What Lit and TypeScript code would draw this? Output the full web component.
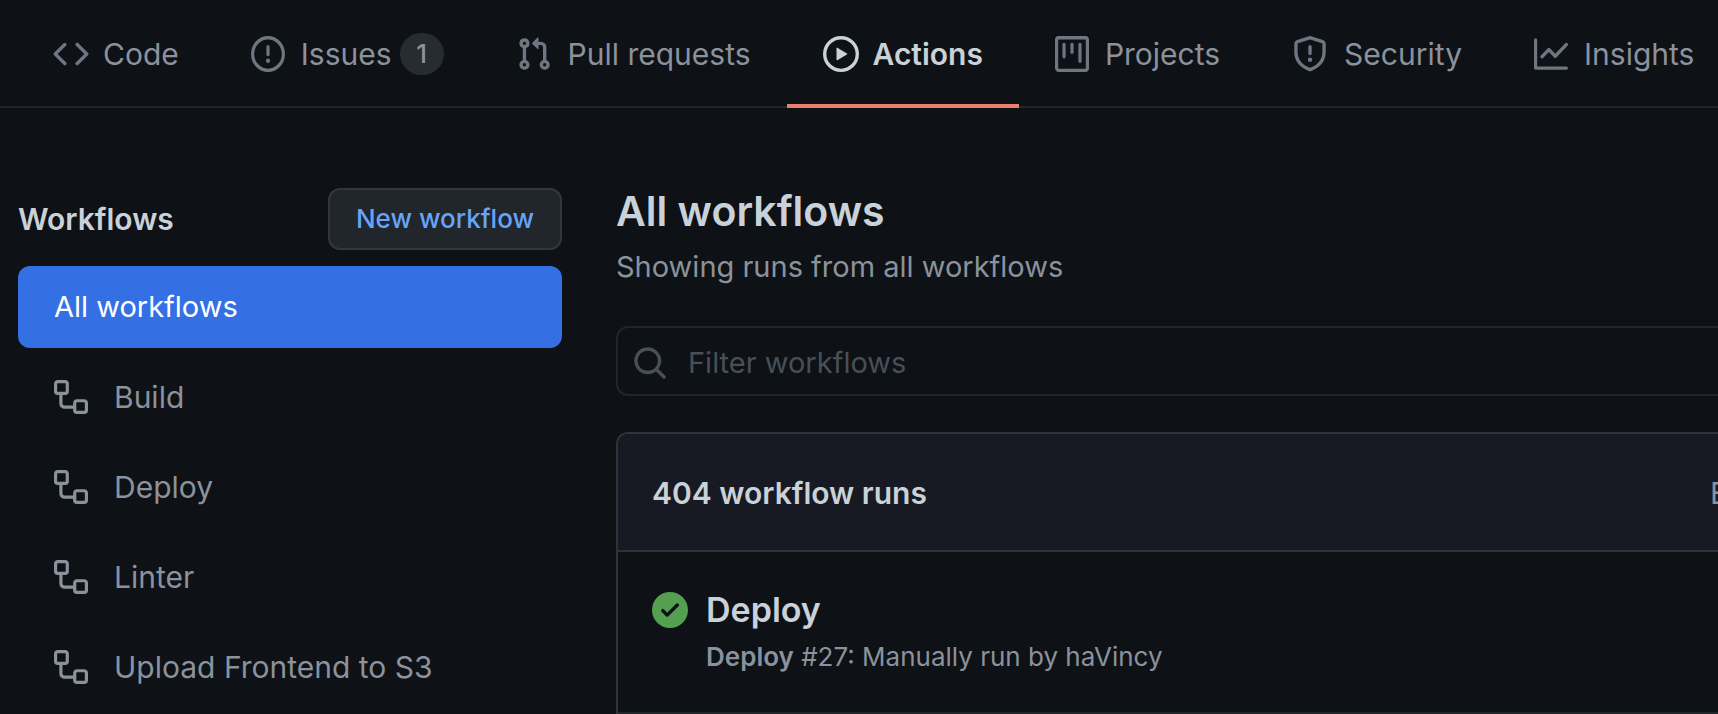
import { LitElement, html, css, svg } from "lit";
import { customElement } from "lit/decorators.js";

const icons: Record<string, string> = {
  code: "M4.72 3.22a.75.75 0 011.06 1.06L2.06 8l3.72 3.72a.75.75 0 11-1.06 1.06L.47 8.53a.75.75 0 010-1.06l4.25-4.25zm6.56 0a.75.75 0 10-1.06 1.06L13.94 8l-3.72 3.72a.75.75 0 101.06 1.06l4.25-4.25a.75.75 0 000-1.06l-4.25-4.25z",
  issue: "M8 1.5a6.5 6.5 0 100 13 6.5 6.5 0 000-13zM0 8a8 8 0 1116 0A8 8 0 010 8zm9 3a1 1 0 11-2 0 1 1 0 012 0zm-.25-6.25a.75.75 0 00-1.5 0v3.5a.75.75 0 001.5 0v-3.5z",
  pull: "M7.177 3.073L9.573.677A.25.25 0 0110 .854v4.792a.25.25 0 01-.427.177L7.177 3.427a.25.25 0 010-.354zM3.75 2.5a.75.75 0 100 1.5.75.75 0 000-1.5zm-2.25.75a2.25 2.25 0 113 2.122v5.256a2.251 2.251 0 11-1.5 0V5.372A2.25 2.25 0 011.5 3.25zM11 2.5h-1V4h1a1 1 0 011 1v5.628a2.251 2.251 0 101.5 0V5A2.5 2.5 0 0011 2.5zm1 10.25a.75.75 0 111.5 0 .75.75 0 01-1.5 0zM3.75 12a.75.75 0 100 1.5.75.75 0 000-1.5z",
  play: "M1.5 8a6.5 6.5 0 1113 0 6.5 6.5 0 01-13 0zM8 0a8 8 0 100 16A8 8 0 008 0zM6.379 5.227A.25.25 0 006 5.442v5.117a.25.25 0 00.379.214l4.264-2.559a.25.25 0 000-.428L6.379 5.227z",
  project: "M1.75 0A1.75 1.75 0 000 1.75v12.5C0 15.216.784 16 1.75 16h12.5A1.75 1.75 0 0016 14.25V1.75A1.75 1.75 0 0014.25 0H1.75zM1.5 1.75a.25.25 0 01.25-.25h12.5a.25.25 0 01.25.25v12.5a.25.25 0 01-.25.25H1.75a.25.25 0 01-.25-.25V1.75zM11.75 3a.75.75 0 00-.75.75v7.5a.75.75 0 001.5 0v-7.5a.75.75 0 00-.75-.75zm-8.25.75a.75.75 0 011.5 0v5.5a.75.75 0 01-1.5 0v-5.5zM8 3a.75.75 0 00-.75.75v3.5a.75.75 0 001.5 0v-3.5A.75.75 0 008 3z",
  shield: "M7.467.133a1.75 1.75 0 011.066 0l5.25 1.68A1.75 1.75 0 0115 3.48V7c0 1.566-.32 3.182-1.303 4.682-.983 1.498-2.585 2.813-5.032 3.855a1.7 1.7 0 01-1.33 0c-2.447-1.042-4.049-2.357-5.032-3.855C1.32 10.182 1 8.566 1 7V3.48a1.75 1.75 0 011.217-1.667l5.25-1.68zm.61 1.429a.25.25 0 00-.153 0l-5.25 1.68a.25.25 0 00-.174.238V7c0 1.358.275 2.666 1.057 3.86.784 1.194 2.121 2.34 4.366 3.297a.2.2 0 00.154 0c2.245-.956 3.582-2.104 4.366-3.298C13.225 9.666 13.5 8.36 13.5 7V3.48a.25.25 0 00-.174-.237l-5.25-1.68zM9 10.5a1 1 0 11-2 0 1 1 0 012 0zm-.25-5.75a.75.75 0 10-1.5 0v3a.75.75 0 001.5 0v-3z",
  graph: "M1.5 1.75a.75.75 0 00-1.5 0v12.5c0 .414.336.75.75.75h14.5a.75.75 0 000-1.5H1.5V1.75zm14.28 2.53a.75.75 0 00-1.06-1.06L10 7.94 7.53 5.47a.75.75 0 00-1.06 0L3.22 8.72a.75.75 0 001.06 1.06L7 7.06l2.47 2.47a.75.75 0 001.06 0l5.25-5.25z",
  workflow: "M0 1.75C0 .784.784 0 1.75 0h3.5C6.216 0 7 .784 7 1.75v3.5A1.75 1.75 0 015.25 7H4v4a1 1 0 001 1h4v-1.25C9 9.784 9.784 9 10.75 9h3.5c.966 0 1.75.784 1.75 1.75v3.5A1.75 1.75 0 0114.25 16h-3.5A1.75 1.75 0 019 14.25v-.75H5A2.5 2.5 0 012.5 11V7h-.75A1.75 1.75 0 010 5.25v-3.5zm1.75-.25a.25.25 0 00-.25.25v3.5c0 .138.112.25.25.25h3.5a.25.25 0 00.25-.25v-3.5a.25.25 0 00-.25-.25h-3.5zm9 9a.25.25 0 00-.25.25v3.5c0 .138.112.25.25.25h3.5a.25.25 0 00.25-.25v-3.5a.25.25 0 00-.25-.25h-3.5z",
  search: "M11.5 7a4.499 4.499 0 11-8.998 0A4.499 4.499 0 0111.5 7zm-.82 4.74a6 6 0 111.06-1.06l3.04 3.04a.75.75 0 11-1.06 1.06l-3.04-3.04z",
  check: "M8 16A8 8 0 108 0a8 8 0 000 16zm3.78-9.72a.75.75 0 00-1.06-1.06L6.75 9.19 5.28 7.72a.75.75 0 00-1.06 1.06l2 2a.75.75 0 001.06 0l4.5-4.5z",
};

const icon = (name: string, size = "") => html`<svg class="icon ${size}" viewBox="0 0 16 16" preserveAspectRatio="none" aria-hidden="true">${svg`<path fill-rule="evenodd" d=${icons[name]}></path>`}</svg>`;

const tabs = [
  { label: "Code", icon: "code" },
  { label: "Issues", icon: "issue", size: "narrow spaced", count: 1 },
  { label: "Pull requests", icon: "pull", size: "spaced" },
  { label: "Actions", icon: "play", current: true },
  { label: "Projects", icon: "project", size: "narrow spaced" },
  { label: "Security", icon: "shield", size: "spaced" },
  { label: "Insights", icon: "graph", size: "narrow spaced" },
];

const workflows = ["Build", "Deploy", "Linter", "Upload Frontend to S3"];

@customElement("app-root")
export class AppRoot extends LitElement {
  static styles = css`
    :host {
      display: block;
      min-height: 100vh;
      overflow: hidden;
      box-sizing: border-box;
      background: #0e1116;
      color: #8b929c;
      font: 30px/42px Inter, "Liberation Sans", sans-serif;
    }
    * { box-sizing: border-box; }
    a { color: inherit; text-decoration: none; }
    h1, h2, h3, p, ul { margin: 0; padding: 0; font-size: inherit; }
    ul { list-style: none; }
    .icon { width: 36px; height: 36px; flex: none; fill: currentColor; }
    .narrow { width: 34px; }
    .spaced { margin-right: 2px; }
    .small { width: 34px; height: 34px; }
    .tabs {
      display: flex;
      height: 108px;
      padding-left: 17px;
      box-shadow: inset 0 -2px #21262c;
    }
    .tab {
      display: flex;
      align-items: center;
      flex: none;
      padding: 0 36px;
      gap: 14px;
      white-space: nowrap;
      border-bottom: 4px solid transparent;
      border-top: 4px solid transparent;
    }
    .tab .icon { color: #6e7681; }
    .tab.current { color: #c9d1d9; font-weight: 600; border-bottom-color: #ea8069; }
    .current .icon { color: inherit; }
    .count {
      min-width: 44px;
      margin-left: -6px;
      border-radius: 21px;
      background: #272c31;
      text-align: center;
      font-size: 26px;
      font-weight: 500;
    }
    .layout {
      display: grid;
      grid-template-columns: 544px minmax(0, 1fr);
      gap: 54px;
      padding: 80px 0 0 18px;
    }
    .side-head {
      display: flex;
      align-items: center;
      justify-content: space-between;
      margin-bottom: 16px;
    }
    .side-head h2, .runs-head h2, .title { color: #c9d1d9; font-weight: 600; }
    .button {
      font: 500 26px/40px Inter, "Liberation Sans", sans-serif;
      color: #67a4f8;
      background: #21252c;
      border: 2px solid #33373d;
      border-radius: 12px;
      padding: 9px 26px;
    }
    .list { display: grid; gap: 8px; }
    .item {
      display: flex;
      align-items: center;
      gap: 26px;
      padding: 20px 36px;
      border-radius: 12px;
    }
    .selected { background: #3470e4; color: #fff; font-size: 29px; }
    .title { font-size: 41px; line-height: 46px; }
    .intro { margin-top: 12px; font-size: 29px; }
    .filter {
      display: flex;
      align-items: center;
      gap: 20px;
      height: 70px;
      margin: 38px -14px 36px 0;
      padding: 4px 14px 0;
      border: 2px solid #21262c;
      border-radius: 12px;
      color: #484f58;
      font-size: 29px;
    }
    .filter input {
      flex: 1;
      min-width: 0;
      border: 0;
      padding: 0;
      outline: 0;
      background: none;
      color: #c9d1d9;
      font: inherit;
    }
    .filter input::placeholder { color: #484f58; opacity: 1; }
    .runs {
      margin-right: -14px;
      border: 2px solid #30343a;
      border-bottom: 0;
      border-radius: 12px 12px 0 0;
    }
    .runs-head {
      display: flex;
      justify-content: space-between;
      padding: 38px 0 36px 34px;
      background: #171a22;
      border-bottom: 2px solid #30343a;
      border-radius: 10px 10px 0 0;
      white-space: nowrap;
    }
    .events { width: 20px; }
    .run {
      display: grid;
      grid-template-columns: 36px 1fr;
      column-gap: 18px;
      align-items: center;
      padding: 32px 34px 34px;
      border-bottom: 2px solid #21262c;
    }
    .run .icon { color: #549f50; }
    .run h3 { font-size: 34px; line-height: 52px; font-weight: 600; color: #c9d1d9; }
    .run p { grid-column: 2; font-size: 26px; line-height: 42px; }
    .run strong { font-weight: 600; }
  `;

  render() {
    return html`
      <nav class="tabs" aria-label="Repository">
        ${tabs.map((t) => html`
          <a class="tab ${t.current ? "current" : ""}" href="#">
            ${icon(t.icon, t.size)}<span>${t.label}</span>
            ${t.count ? html`<span class="count">${t.count}</span>` : ""}
          </a>`)}
      </nav>
      <div class="layout">
        <aside>
          <div class="side-head">
            <h2>Workflows</h2>
            <button class="button" type="button">New workflow</button>
          </div>
          <ul class="list">
            <li><a class="item selected" href="#">All workflows</a></li>
            ${workflows.map((w) => html`<li><a class="item" href="#">${icon("workflow", "small")}<span>${w}</span></a></li>`)}
          </ul>
        </aside>
        <main>
          <h1 class="title">All workflows</h1>
          <p class="intro">Showing runs from all workflows</p>
          <label class="filter">
            ${icon("search")}
            <input type="text" placeholder="Filter workflows" aria-label="Filter workflows" />
          </label>
          <section class="runs">
            <div class="runs-head">
              <h2>404 workflow runs</h2>
              <a class="events" href="#">Event</a>
            </div>
            <div class="run">
              ${icon("check")}
              <h3><a href="#">Deploy</a></h3>
              <p><strong>Deploy</strong> #27: Manually run by haVincy</p>
            </div>
          </section>
        </main>
      </div>`;
  }
}
